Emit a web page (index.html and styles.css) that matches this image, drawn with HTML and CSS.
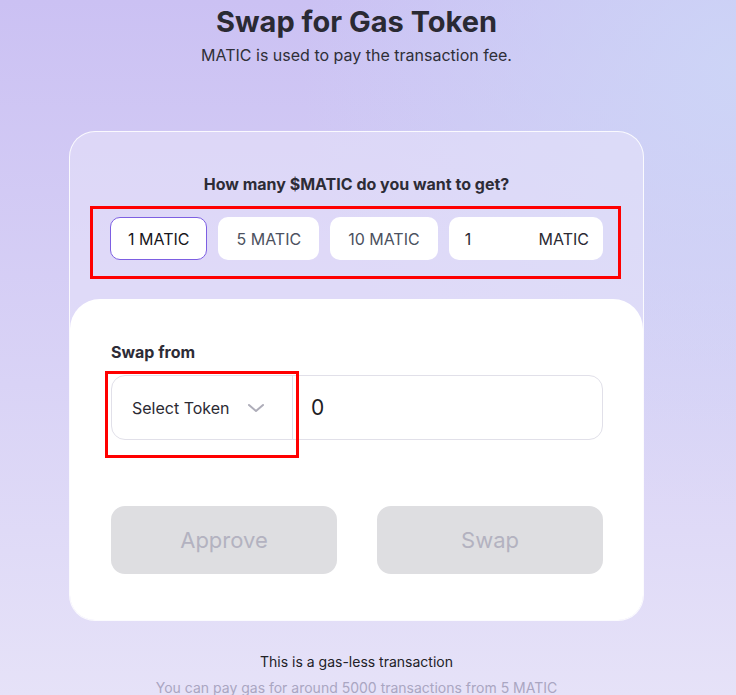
FILE: index.html
```html
<!DOCTYPE html>
<html lang="en">
<head>
  <meta charset="UTF-8">
  <title>Swap for Gas Token</title>
  <link rel="stylesheet" href="styles.css">
</head>
<body>
  <div class="page">
    <h1>Swap for Gas Token</h1>
    <p class="subtitle">MATIC is used to pay the transaction fee.</p>

    <div class="card">
      <div class="card-top">
        <p class="question">How many $MATIC do you want to get?</p>
        <div class="chips-box">
          <div class="chips">
            <button class="chip active">1 MATIC</button>
            <button class="chip">5 MATIC</button>
            <button class="chip">10 MATIC</button>
            <label class="chip chip-input">
              <input type="text" value="1">
              <span>MATIC</span>
            </label>
          </div>
        </div>
      </div>

      <div class="card-body">
        <p class="field-label">Swap from</p>
        <div class="swap-row">
          <div class="token-select">
            <span>Select Token</span>
            <svg width="18" height="10" viewBox="0 0 18 10"><path d="M2 2l7 6 7-6" fill="none" stroke="#aeadb9" stroke-width="2" stroke-linecap="round" stroke-linejoin="round"/></svg>
            <div class="mark"></div>
          </div>
          <input class="amount" type="text" value="0">
        </div>

        <div class="actions">
          <button class="action" disabled>Approve</button>
          <button class="action" disabled>Swap</button>
        </div>
      </div>
    </div>

    <p class="note">This is a gas-less transaction</p>
    <p class="note muted">You can pay gas for around 5000 transactions from 5 MATIC</p>
  </div>
</body>
</html>
```

FILE: styles.css
```css
* { box-sizing: border-box; }
body {
  margin: 0;
  min-height: 695px;
  font-family: 'Inter', 'Noto Sans', sans-serif;
  color: #2b2a33;
  background:
    radial-gradient(circle at 100% 10%, rgba(205, 214, 247, 0.9), rgba(205, 214, 247, 0) 45%),
    linear-gradient(to bottom, #cbc1f3 0%, #d9d3f6 55%, #e6e2f8 100%);
}
.page {
  width: 575px;
  margin-left: 69px;
  text-align: center;
}
h1 {
  margin: 0;
  padding-top: 5px;
  font-size: 29px;
  line-height: 34px;
  font-weight: 700;
  color: #2a2a33;
}
.subtitle {
  margin: 6px 0 0;
  font-size: 16px;
  line-height: 20px;
  color: #2f2f38;
}
.card {
  margin-top: 66px;
  border: 1px solid rgba(255, 255, 255, 0.85);
  border-radius: 26px;
  background: rgba(232, 227, 250, 0.55);
  overflow: hidden;
}
.card-top { padding: 42px 0 20px; }
.question {
  margin: 0 0 12px;
  font-size: 16px;
  line-height: 20px;
  font-weight: 700;
  color: #2d2c36;
}
.chips-box {
  margin: 0 22px 0 20px;
  border: 3px solid #ff0000;
  padding: 8px 15px 16px 17px;
}
.chips { display: flex; gap: 11px; height: 43px; }
.chip {
  flex-shrink: 0;
  height: 43px;
  padding: 0 17px;
  border: 1px solid transparent;
  border-radius: 10px;
  background: #fff;
  font-family: inherit;
  font-size: 16px;
  white-space: nowrap;
  color: #4c5160;
  cursor: pointer;
}
.chip.active { border-color: #7d5fe2; color: #17161c; }
.chip-input {
  flex: 1;
  flex-shrink: 1;
  min-width: 0;
  display: flex;
  align-items: center;
  padding: 0 13px;
  color: #2b2a33;
}
.chip-input input {
  flex: 1;
  width: 0;
  min-width: 0;
  border: none;
  outline: none;
  font-family: inherit;
  font-size: 16px;
  color: #2b2a33;
}
.card-body {
  background: #fff;
  border-radius: 30px 30px 0 0;
  padding: 43px 40px 46px 41px;
  text-align: left;
}
.field-label {
  margin: 0 0 13px;
  font-size: 16px;
  line-height: 20px;
  font-weight: 700;
  color: #2d2c36;
}
.swap-row {
  display: flex;
  height: 65px;
  border: 1px solid #e1e0e9;
  border-radius: 14px;
}
.token-select {
  position: relative;
  flex: 0 0 181px;
  display: flex;
  align-items: center;
  justify-content: space-between;
  padding: 0 27px 0 20px;
  border-right: 1px solid #e1e0e9;
  font-size: 16px;
  white-space: nowrap;
  color: #2b2a33;
}
.mark {
  position: absolute;
  left: -7px;
  top: -5px;
  width: 194px;
  height: 87px;
  border: 3px solid #ff0000;
}
.amount {
  flex: 1;
  width: 0;
  border: none;
  outline: none;
  background: transparent;
  padding: 0 18px;
  font-family: inherit;
  font-size: 21px;
  color: #1e1d24;
}
.actions {
  display: flex;
  gap: 40px;
  margin-top: 66px;
}
.action {
  flex: 1;
  height: 68px;
  border: none;
  border-radius: 14px;
  background: #dedee1;
  font-family: inherit;
  font-size: 22px;
  color: #b3b2c0;
}
.note {
  margin: 32px 0 0;
  font-size: 14px;
  line-height: 18px;
  color: #222127;
}
.note.muted { margin-top: 8px; color: #aaa6c2; }
```
